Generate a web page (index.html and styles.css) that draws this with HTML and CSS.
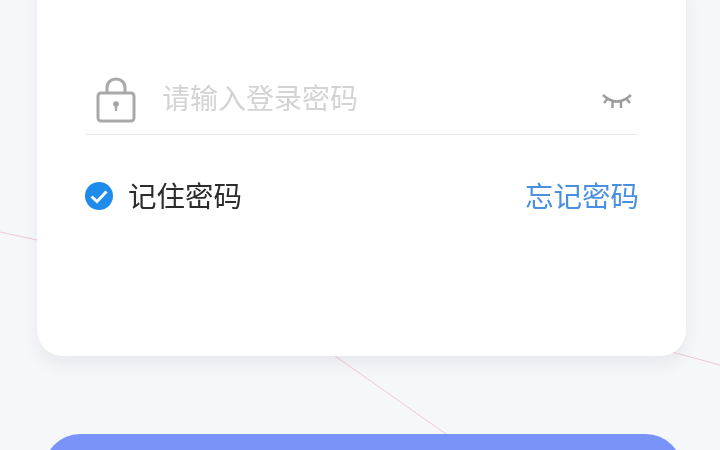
FILE: index.html
```html
<!DOCTYPE html>
<html lang="zh-CN">
<head>
<meta charset="utf-8">
<title>登录</title>
<link rel="stylesheet" href="styles.css">
</head>
<body>
<div class="page">
  <svg class="bg-lines" width="720" height="450" viewBox="0 0 720 450" aria-hidden="true">
    <path d="M0 232L37 240M335 356L446 434M672 352L720 365"/>
  </svg>
  <main class="card">
    <div class="field">
      <svg class="lock" width="40" height="46" viewBox="0 0 40 46" aria-hidden="true">
        <path class="stroke" d="M11 16V11C11 5.500 14.800 2 20 2s9 3.500 9 9V16"/>
        <rect class="stroke" x="2" y="16" width="36" height="28" rx="3"/>
        <circle class="dot" cx="20" cy="27" r="2.800"/>
        <path class="stroke thin" d="M20 28v6"/>
      </svg>
      <input class="pwd" type="password" placeholder="请输入登录密码">
      <svg class="eye" width="30" height="18" viewBox="0 0 30 18" aria-hidden="true">
        <path d="M1 3Q15 16 29 3M10.500 10V16M19 10V16M5 7.500L2 11M25 7.500L28 11"/>
      </svg>
    </div>
    <div class="options">
      <label class="remember">
        <svg class="check" width="28" height="28" viewBox="0 0 28 28" aria-hidden="true">
          <circle cx="14" cy="14" r="14"/>
          <path d="M6.500 14.500L12 19.500L21.500 9.500"/>
        </svg>
        <span class="label-text">记住密码</span>
      </label>
      <a class="forgot" href="#">忘记密码</a>
    </div>
  </main>
  <button class="submit" type="button"></button>
</div>
</body>
</html>
```
FILE: styles.css
```css
* {
  box-sizing: border-box;
}

html,
body {
  margin: 0;
  height: 100%;
  overflow: hidden;
}

body {
  background: #f6f7fb;
  font-family: "Noto Sans CJK SC", "Liberation Sans", sans-serif;
}

.page {
  position: relative;
  width: 720px;
  height: 450px;
  overflow: hidden;
  padding: 0 37px 0;
}

.bg-lines {
  position: absolute;
  left: 0;
  top: 0;
  filter: blur(0.4px);
}

.bg-lines path {
  fill: none;
  stroke: #eec9d3;
  stroke-width: 1;
}

.card {
  position: relative;
  width: 649px;
  height: 386px;
  margin-top: -30px;
  padding: 102px 49px 0 48px;
  background: #fff;
  border-radius: 26px;
  box-shadow: 0 9px 16px rgba(50, 55, 70, 0.07);
}

.field {
  display: flex;
  align-items: center;
  height: 63px;
  padding: 0 5px 8px 11px;
  border-bottom: 1px solid #e9eaec;
}

.lock {
  flex: none;
  margin-top: 1px;
  filter: blur(0.4px);
}

.lock .stroke {
  fill: none;
  stroke: #a9a9a9;
  stroke-width: 3;
}

.lock .thin {
  stroke-width: 2.500;
}

.lock .dot {
  fill: #a3a3a3;
}

.pwd {
  flex: 1;
  min-width: 0;
  height: 44px;
  margin: 0 0 4px 26px;
  padding: 0;
  border: 0;
  outline: 0;
  background: transparent;
  font: 28px "Noto Sans CJK SC", "Liberation Sans", sans-serif;
  color: #333;
  filter: blur(0.4px);
}

.pwd::placeholder {
  color: #d3d3d3;
  opacity: 1;
}

.eye {
  flex: none;
  margin-top: 4px;
  filter: blur(0.4px);
}

.eye path {
  fill: none;
  stroke: #9c9c9c;
  stroke-width: 2.400;
}

.options {
  display: flex;
  align-items: center;
  justify-content: space-between;
  margin-top: 41px;
  height: 40px;
}

.remember {
  display: flex;
  align-items: center;
  gap: 15px;
  font-size: 28.500px;
  line-height: 40px;
  color: #2c2c2c;
}

.check {
  flex: none;
  filter: blur(0.4px);
}

.check circle {
  fill: #1f8ceb;
}

.check path {
  fill: none;
  stroke: #fff;
  stroke-width: 3;
}

.label-text {
  padding-bottom: 2px;
  filter: blur(0.4px);
}

.forgot {
  margin-right: -2px;
  padding-bottom: 2px;
  font-size: 28.500px;
  line-height: 40px;
  color: #4a90e2;
  text-decoration: none;
  filter: blur(0.4px);
}

.submit {
  position: relative;
  display: block;
  width: 638px;
  height: 88px;
  margin: 78px 0 0 7px;
  border: 0;
  border-radius: 36px;
  background: #7a93f9;
}
```
